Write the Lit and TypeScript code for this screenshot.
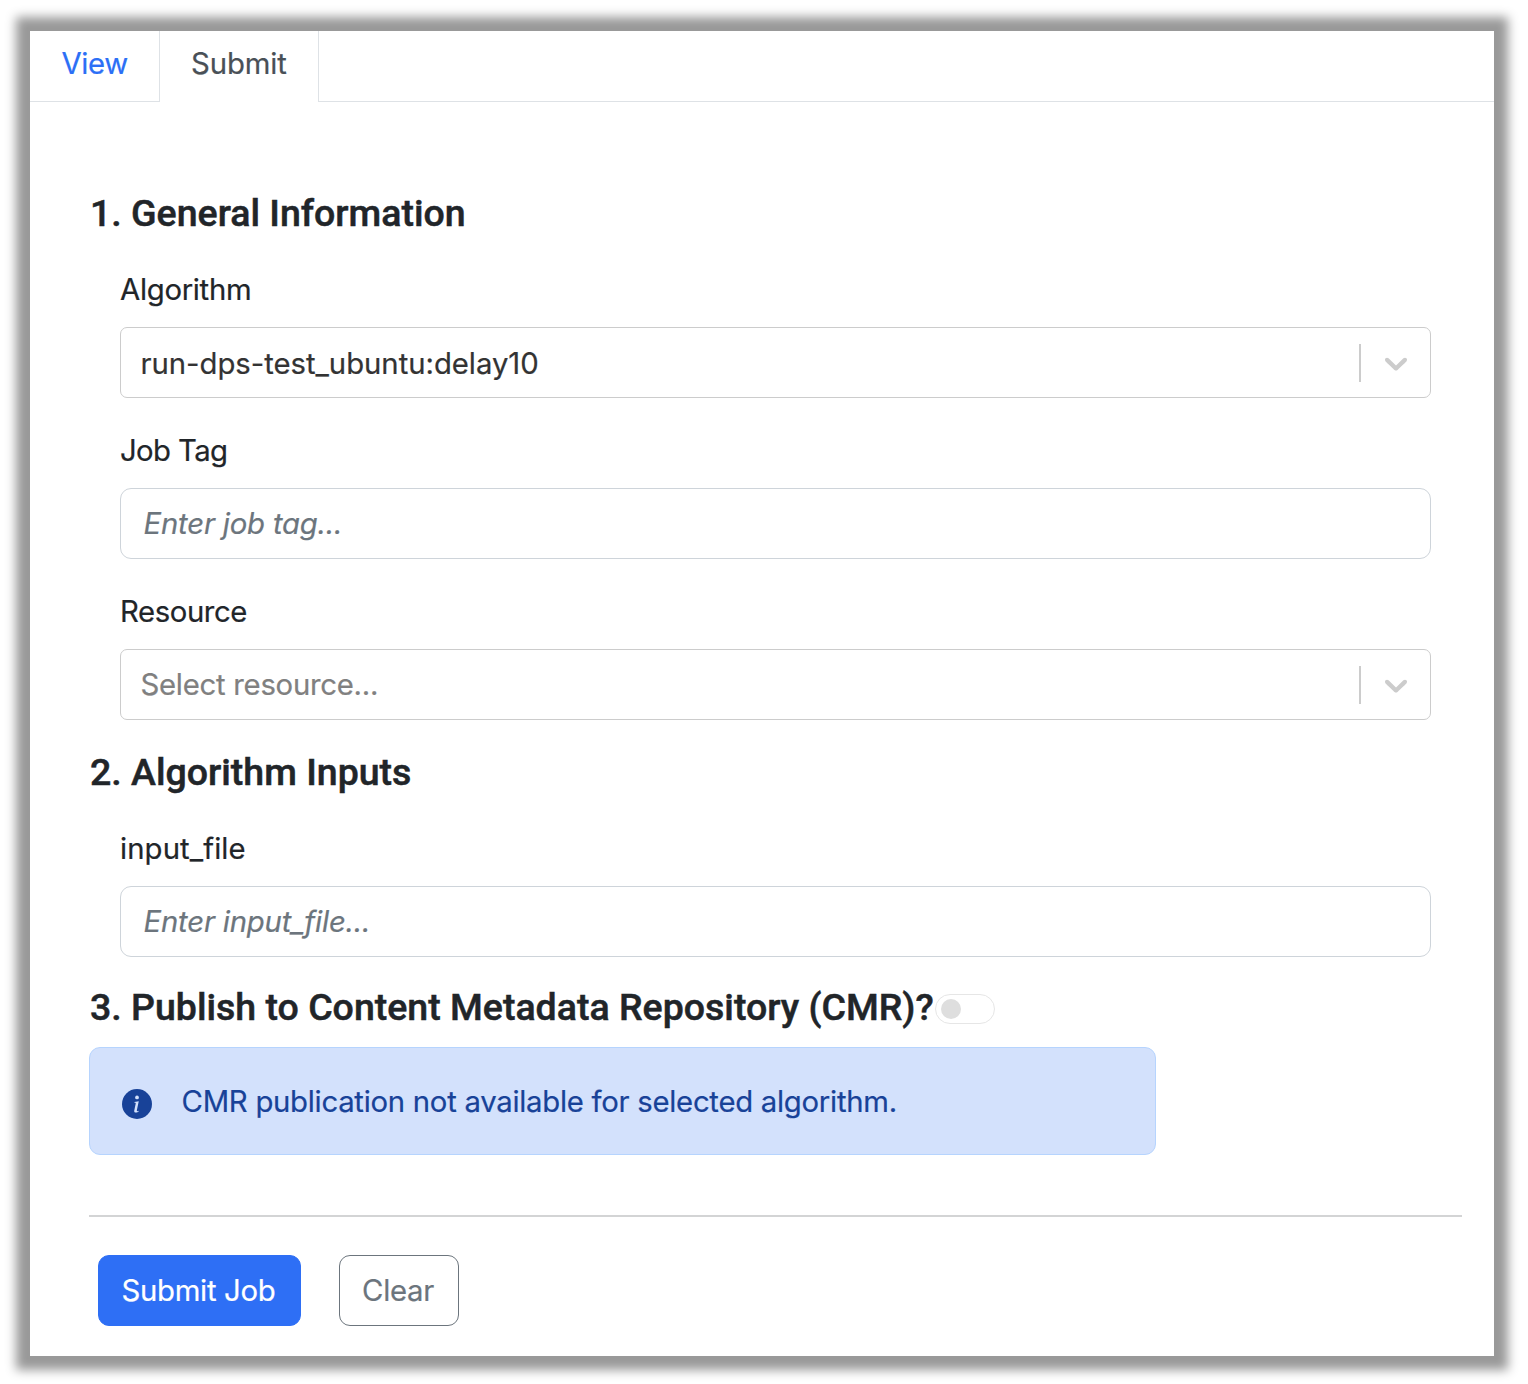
import { LitElement, html, css, svg, unsafeCSS } from "lit";
import { customElement, property } from "lit/decorators.js";

const textFont = unsafeCSS(`Inter, "Liberation Sans", sans-serif`);

@customElement("select-box")
class SelectBox extends LitElement {
  @property() value = "";
  @property() placeholder = "";

  static styles = css`
    :host { display: block; }
    .control {
      box-sizing: border-box;
      height: 71px;
      display: flex;
      align-items: center;
      border: 1px solid #ccc;
      border-radius: 7px;
      background: #fff;
      padding-left: 19.5px;
      font: 400 29.3px/45px ${textFont};
      -webkit-text-stroke: 0.2px currentColor;
      color: #333;
    }
    .text { flex: 1; white-space: nowrap; }
    .value { letter-spacing: -0.03px; padding-top: 1px; }
    .placeholder { color: #808080; letter-spacing: -0.26px; }
    .separator { width: 2px; height: 38px; background: #ccc; }
    .indicator { width: 69px; display: flex; justify-content: center; }
    .indicator svg { display: block; width: 38px; height: 38px; fill: #ccc; }
  `;

  render() {
    return html`<div class="control">
      <span class="text ${this.value ? "value" : "placeholder"}">${this.value || this.placeholder}</span>
      <span class="separator"></span>
      <span class="indicator">
        <svg viewBox="0 0 20 20" aria-hidden="true">
          <path d="M4.516 7.548c0.436-0.446 1.043-0.481 1.576 0l3.908 3.747 3.908-3.747c0.533-0.481 1.141-0.446 1.574 0 0.436 0.445 0.408 1.197 0 1.615-0.406 0.418-4.695 4.502-4.695 4.502-0.217 0.223-0.502 0.335-0.787 0.335s-0.57-0.112-0.789-0.335c0 0-4.287-4.084-4.695-4.502s-0.436-1.17 0-1.615z"></path>
        </svg>
      </span>
    </div>`;
  }
}

@customElement("app-root")
class AppRoot extends LitElement {
  static styles = css`
    :host { display: block; background: #fff; }
    .page {
      box-sizing: border-box;
      height: 1384px;
      padding: 31px 34px 28px 30px;
      overflow: hidden;
      font: 400 29.3px/45px ${textFont};
      -webkit-text-stroke: 0.2px currentColor;
      color: #212529;
    }
    .card {
      box-sizing: border-box;
      height: 1325px;
      background: #fff;
      box-shadow: 0 0 10px 14px #999;
    }
    .tabs { display: flex; height: 71px; }
    .tab {
      box-sizing: border-box;
      padding: 10px 31px 0;
      white-space: nowrap;
      border-bottom: 1px solid #dee2e6;
    }
    .link { width: 129px; padding-left: 31.5px; color: #2c6ff6; letter-spacing: -0.4px; }
    .active {
      width: 160px;
      color: #495057;
      letter-spacing: -0.1px;
      border: solid #dee2e6;
      border-width: 0 1px;
    }
    .filler { flex: 1; border-bottom: 1px solid #dee2e6; }
    .form { padding: 89px 32px 0 59px; }
    h2 {
      margin: 0;
      padding-left: 1px;
      font: 500 37.5px/45px Roboto, sans-serif;
      -webkit-text-stroke: 0.5px currentColor;
      white-space: nowrap;
    }
    .group { padding: 31px 31px 30px; display: flex; flex-direction: column; gap: 30px; }
    .field { display: flex; flex-direction: column; gap: 15px; }
    .inputs { padding-bottom: 28px; }
    label { letter-spacing: -0.3px; white-space: nowrap; }
    .tight { letter-spacing: -0.6px; }
    .snug { letter-spacing: -0.4px; }
    .loose { letter-spacing: 0.1px; }
    input {
      box-sizing: border-box;
      width: 100%;
      height: 71px;
      margin: 0;
      padding: 0 22.5px;
      border: 1px solid #ced4da;
      border-radius: 11px;
      background: #fff;
      font: italic 400 29.3px/45px ${textFont};
      letter-spacing: -0.19px;
    }
    input::placeholder { color: #6c757d; opacity: 1; }
    .publish { display: flex; align-items: center; }
    .switch {
      box-sizing: border-box;
      width: 60px;
      height: 30px;
      margin: 2px 0 0 1px;
      padding: 4px 5px;
      border: 1px solid #e6e6e6;
      border-radius: 15px;
    }
    .knob { width: 20px; height: 20px; border-radius: 50%; background: #dedede; }
    .alert {
      box-sizing: border-box;
      width: 1067px;
      height: 108px;
      margin-top: 17px;
      padding: 0 31px 0 32px;
      display: flex;
      align-items: center;
      gap: 29.5px;
      border: 1px solid #b6d4fe;
      border-radius: 11px;
      background: #d3e1fc;
      color: #184298;
      white-space: nowrap;
      letter-spacing: -0.27px;
    }
    .alert svg { width: 30px; height: 30px; margin-top: 5px; flex: none; }
    .rule { height: 2px; margin-top: 60px; background: #d3d4d5; }
    .actions { display: flex; gap: 38px; padding: 38px 9px 0; }
    button {
      box-sizing: border-box;
      height: 71px;
      margin: 0;
      padding: 0 2px 0 0;
      border-radius: 11px;
      font: 400 29.3px/45px ${textFont};
      letter-spacing: -0.3px;
      white-space: nowrap;
    }
    .primary { width: 203px; border: 1px solid #2e6ff5; background: #2e6ff5; color: #fff; }
    .secondary { width: 120px; border: 1px solid #6c757d; background: #fff; color: #6c757d; }
  `;

  private infoIcon() {
    return html`<svg viewBox="0 0 16 16" aria-hidden="true">
      ${svg`<circle cx="8" cy="8" r="8" fill="#184298"></circle><circle cx="8" cy="4.5" r="1" fill="#d3e1fc"></circle><path fill="#d3e1fc" d="m8.93 6.588-2.29.287-.082.38.45.083c.294.07.352.176.288.469l-.738 3.468c-.194.897.105 1.319.808 1.319.545 0 1.178-.252 1.465-.598l.088-.416c-.2.176-.492.246-.686.246-.275 0-.375-.193-.304-.533z"></path>`}
    </svg>`;
  }

  render() {
    return html`<div class="page">
      <main class="card">
        <nav class="tabs">
          <div class="tab link">View</div>
          <div class="tab active">Submit</div>
          <div class="filler"></div>
        </nav>
        <section class="form">
          <h2>1. General Information</h2>
          <div class="group">
            <div class="field">
              <label>Algorithm</label>
              <select-box value="run-dps-test_ubuntu:delay10"></select-box>
            </div>
            <div class="field">
              <label class="tight">Job Tag</label>
              <input placeholder="Enter job tag..." />
            </div>
            <div class="field">
              <label class="snug">Resource</label>
              <select-box placeholder="Select resource..."></select-box>
            </div>
          </div>
          <h2>2. Algorithm Inputs</h2>
          <div class="group inputs">
            <div class="field">
              <label class="loose">input_file</label>
              <input placeholder="Enter input_file..." />
            </div>
          </div>
          <div class="publish">
            <h2>3. Publish to Content Metadata Repository (CMR)?</h2>
            <div class="switch"><div class="knob"></div></div>
          </div>
          <div class="alert">
            ${this.infoIcon()}
            <span>CMR publication not available for selected algorithm.</span>
          </div>
          <div class="rule"></div>
          <div class="actions">
            <button class="primary">Submit Job</button>
            <button class="secondary">Clear</button>
          </div>
        </section>
      </main>
    </div>`;
  }
}
